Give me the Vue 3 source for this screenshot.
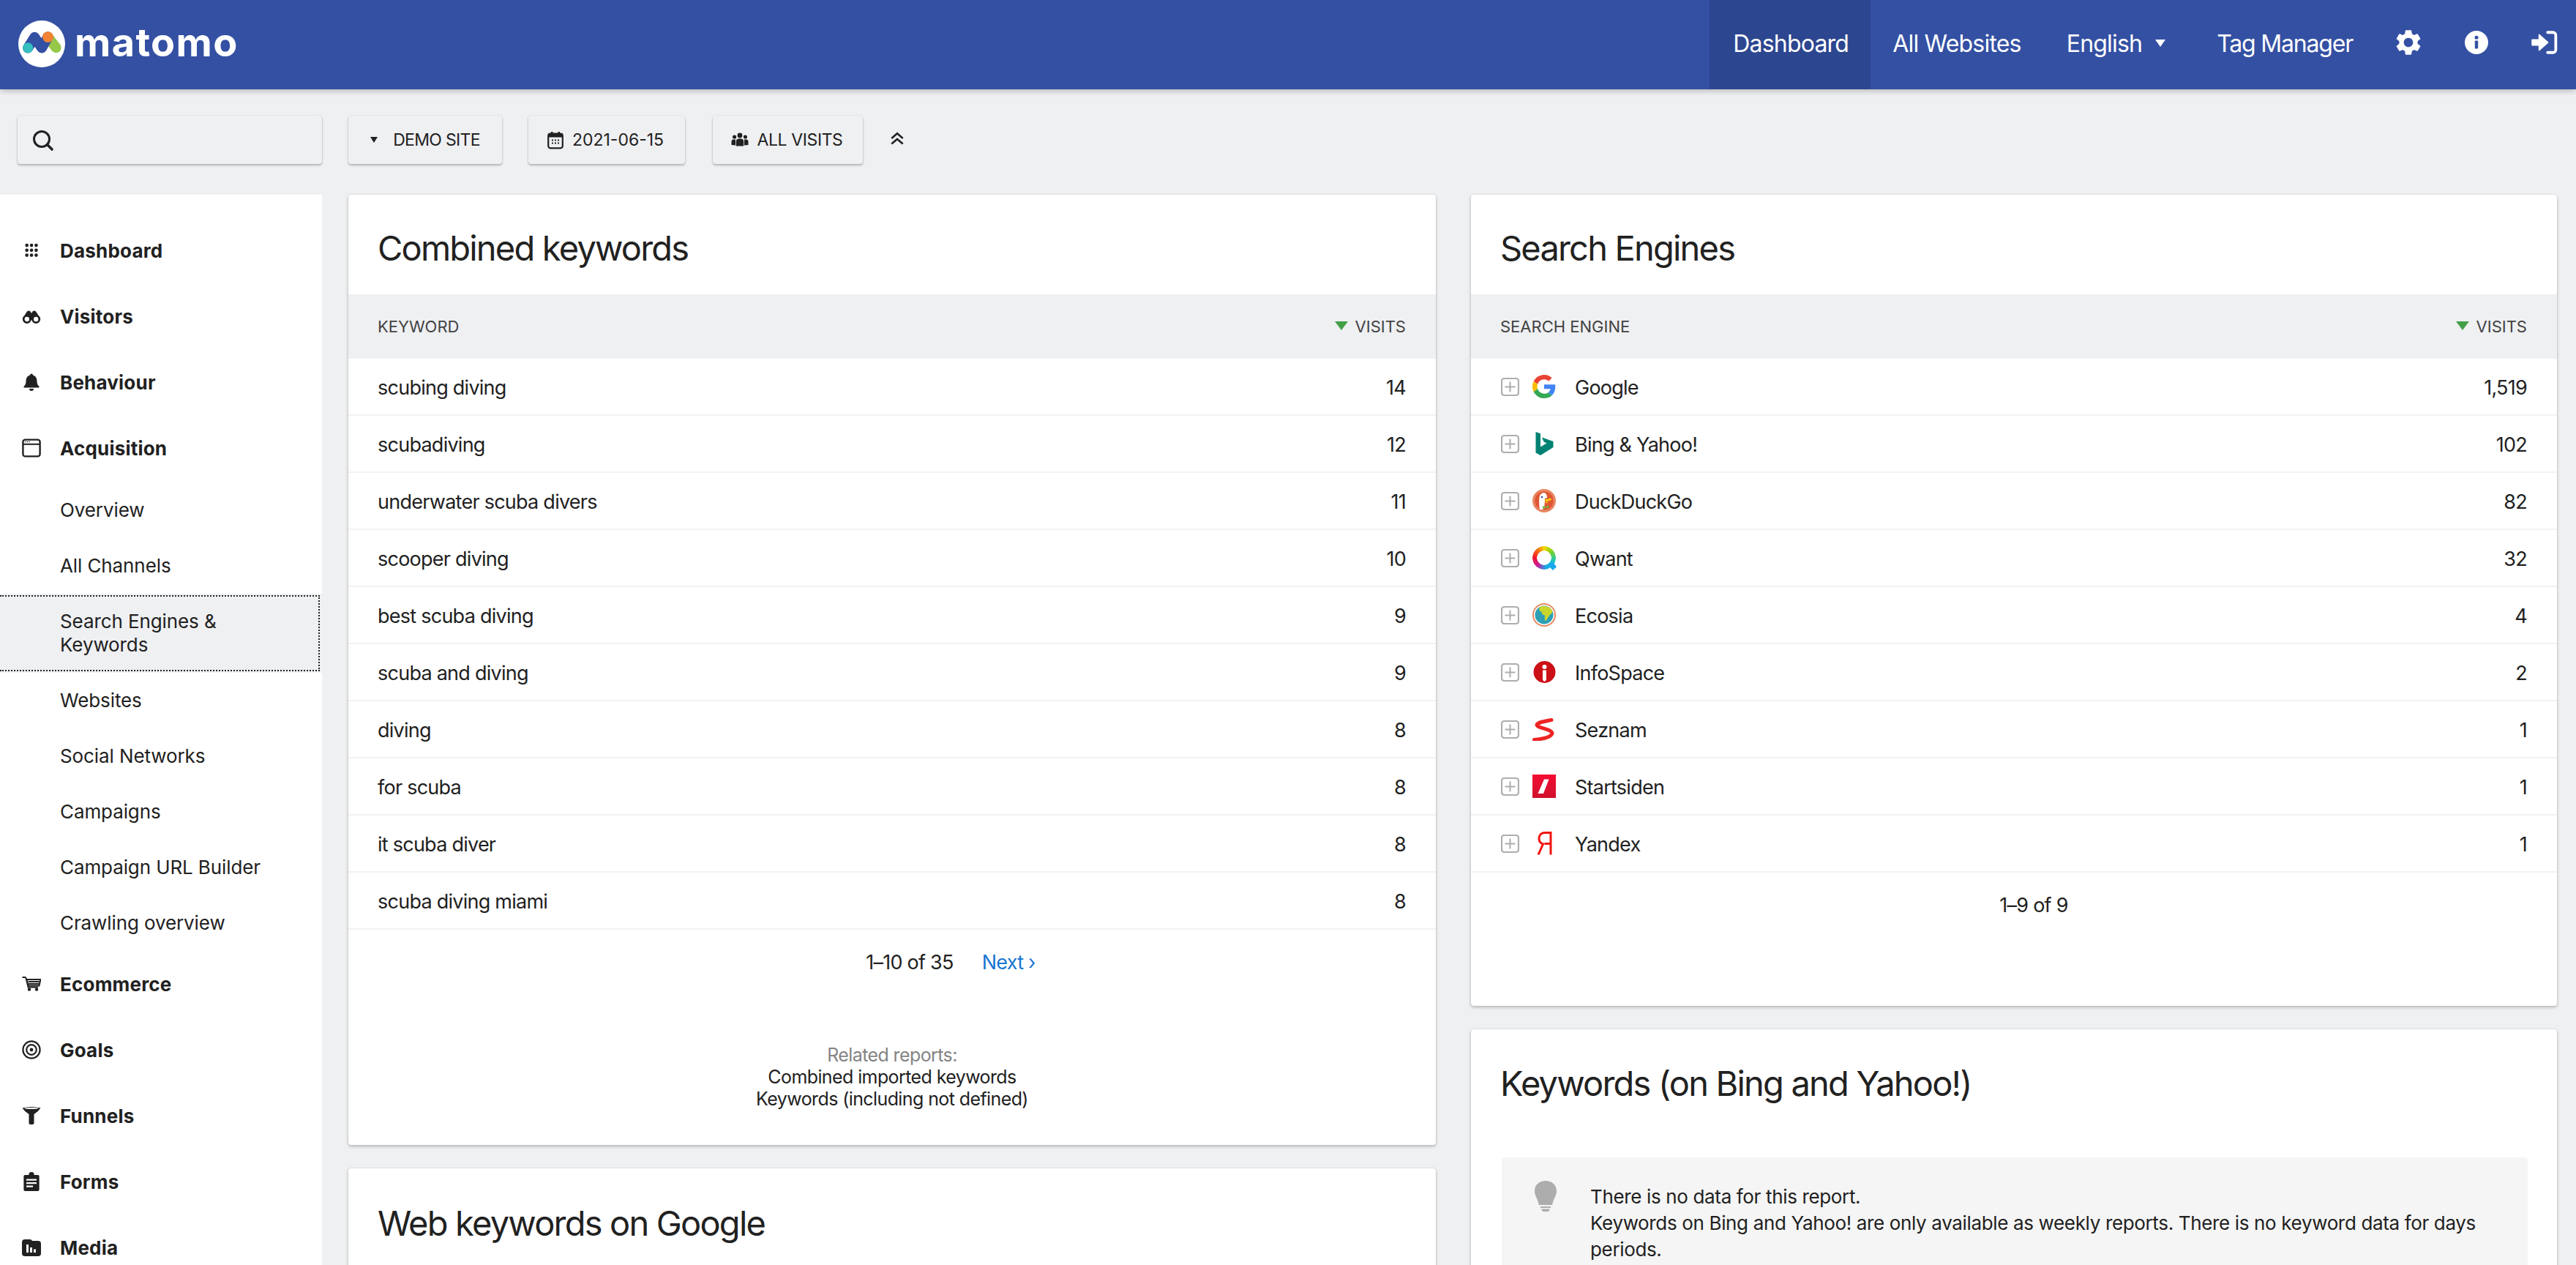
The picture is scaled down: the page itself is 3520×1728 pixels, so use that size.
<script setup>
const mainTop = [
  { name: 'Dashboard', icon: 'grid' },
  { name: 'Visitors', icon: 'binoc' },
  { name: 'Behaviour', icon: 'bell' },
  { name: 'Acquisition', icon: 'window' },
]
const subs = ['Overview', 'All Channels', 'Search Engines & Keywords', 'Websites', 'Social Networks', 'Campaigns', 'Campaign URL Builder', 'Crawling overview']
const mainBottom = [
  { name: 'Ecommerce', icon: 'cart' },
  { name: 'Goals', icon: 'goal' },
  { name: 'Funnels', icon: 'funnel' },
  { name: 'Forms', icon: 'form' },
  { name: 'Media', icon: 'media' },
]
const keywords = [
  ['scubing diving', 14], ['scubadiving', 12], ['underwater scuba divers', 11], ['scooper diving', 10],
  ['best scuba diving', 9], ['scuba and diving', 9], ['diving', 8], ['for scuba', 8], ['it scuba diver', 8], ['scuba diving miami', 8],
]
const engines = [
  ['Google', '1,519', 'google'], ['Bing & Yahoo!', '102', 'bing'], ['DuckDuckGo', '82', 'ddg'], ['Qwant', '32', 'qwant'],
  ['Ecosia', '4', 'ecosia'], ['InfoSpace', '2', 'infospace'], ['Seznam', '1', 'seznam'], ['Startsiden', '1', 'startsiden'], ['Yandex', '1', 'yandex'],
]
</script>

<template>
  <div class="page">
    <header class="topbar">
      <div class="brand">
        <svg class="brand-mark" viewBox="0 0 190 190" aria-hidden="true">
          <circle cx="95" cy="95" r="95" fill="#fff" />
          <path d="M120 67 L153 110" stroke="#95c748" stroke-width="42" stroke-linecap="round" fill="none" />
          <path d="M39 111 L66 68 L95 111 L120 67" stroke="#3450a3" stroke-width="42" stroke-linecap="round" stroke-linejoin="round" fill="none" />
          <circle cx="39" cy="111" r="21" fill="#35bfc0" />
          <circle cx="120" cy="67" r="22" fill="#f38334" />
        </svg>
        <span class="brand-text">matomo</span>
      </div>
      <nav class="topnav">
        <a class="navlink active">Dashboard</a>
        <a class="navlink">All Websites</a>
        <a class="navlink lang">English<i class="caret"></i></a>
        <a class="navlink tag">Tag Manager</a>
        <svg class="navicon gear" viewBox="0 0 24 24"><path fill="#fff" d="M19.14 12.94c.04-.3.06-.61.06-.94 0-.32-.02-.64-.07-.94l2.03-1.58c.18-.14.23-.41.12-.61l-1.92-3.32c-.12-.22-.37-.29-.59-.22l-2.39.96c-.5-.38-1.03-.7-1.62-.94l-.36-2.54c-.04-.24-.24-.41-.48-.41h-3.84c-.24 0-.43.17-.47.41l-.36 2.54c-.59.24-1.13.57-1.62.94l-2.39-.96c-.22-.08-.47 0-.59.22L2.74 8.87c-.12.21-.08.47.12.61l2.03 1.58c-.05.3-.09.63-.09.94s.02.64.07.94l-2.03 1.58c-.18.14-.23.41-.12.61l1.92 3.32c.12.22.37.29.59.22l2.39-.96c.5.38 1.03.7 1.62.94l.36 2.54c.05.24.24.41.48.41h3.84c.24 0 .44-.17.47-.41l.36-2.54c.59-.24 1.13-.56 1.62-.94l2.39.96c.22.08.47 0 .59-.22l1.92-3.32c.12-.22.07-.47-.12-.61l-2.01-1.58zM12 15.6c-1.98 0-3.6-1.62-3.6-3.6s1.62-3.6 3.6-3.6 3.6 1.62 3.6 3.6-1.62 3.6-3.6 3.6z" /></svg>
        <svg class="navicon info" viewBox="0 0 32 32"><circle cx="16" cy="16" r="16" fill="#fff" /><rect x="13.8" y="13.5" width="4.4" height="11" rx="1" fill="#3450a3" /><circle cx="16" cy="9.2" r="2.5" fill="#3450a3" /></svg>
        <svg class="navicon signin" viewBox="0 0 34 32"><path d="M21 3 h7 a3.5 3.5 0 0 1 3.5 3.5 v19 a3.5 3.5 0 0 1 -3.5 3.5 h-7" fill="none" stroke="#fff" stroke-width="3.6" stroke-linecap="round" /><path d="M1 12.5 h9 v-6.5 l11.5 10 l-11.5 10 v-6.5 h-9 z" fill="#fff" stroke="#fff" stroke-width="1.5" stroke-linejoin="round" /></svg>
      </nav>
    </header>

    <section class="filters">
      <div class="searchbox">
        <svg class="search-ic" viewBox="0 0 30 30"><circle cx="13" cy="13" r="10.5" fill="none" stroke="#212121" stroke-width="3" /><path d="M20.5 20.5 L27 27" stroke="#212121" stroke-width="3.6" stroke-linecap="round" /></svg>
      </div>
      <div class="fbtn site"><i class="caret dark"></i>DEMO SITE</div>
      <div class="fbtn date">
        <svg class="btn-ic" viewBox="0 0 22 24"><rect x="1.2" y="3" width="19.6" height="19.8" rx="3" fill="none" stroke="#212121" stroke-width="2.2" /><rect x="1" y="3" width="20" height="5" fill="#212121" /><rect x="5" y="0.5" width="2.5" height="4" fill="#212121" /><rect x="14.5" y="0.5" width="2.5" height="4" fill="#212121" /><g fill="#212121"><rect x="6" y="11" width="2" height="2" /><rect x="10" y="11" width="2" height="2" /><rect x="14" y="11" width="2" height="2" /><rect x="6" y="15" width="2" height="2" /><rect x="10" y="15" width="2" height="2" /><rect x="14" y="15" width="2" height="2" /></g></svg>
        2021-06-15
      </div>
      <div class="fbtn visits">
        <svg class="btn-ic wide" viewBox="0 0 24 20"><g fill="#212121"><circle cx="12" cy="4" r="3.4" /><circle cx="4.6" cy="6" r="2.6" /><circle cx="19.4" cy="6" r="2.6" /><path d="M6.8 18.5 v-6 a4 4 0 0 1 4 -4 h2.4 a4 4 0 0 1 4 4 v6 z" /><path d="M0.5 17 v-4.5 a3 3 0 0 1 3 -3 h2.5 v8 z" /><path d="M23.5 17 v-4.5 a3 3 0 0 0 -3 -3 h-2.5 v8 z" /></g></svg>
        ALL VISITS
      </div>
      <svg class="collapse" viewBox="0 0 20 20"><path d="M3 9 L10 3 L17 9 M3 16 L10 10 L17 16" fill="none" stroke="#212121" stroke-width="2.4" /></svg>
    </section>

    <div class="body">
      <aside class="sidebar">
        <div v-for="m in mainTop" :key="m.name" class="mainitem">
          <span class="mi"><svg viewBox="0 0 26 26">
            <g v-if="m.icon === 'grid'" fill="#212121"><circle v-for="c in [[4.5,4],[13,4],[21.5,4],[4.5,13],[13,13],[21.5,13],[4.5,22],[13,22],[21.5,22]]" :key="c.join()" :cx="c[0]" :cy="c[1]" r="3.1" transform="translate(3.3 3.1) scale(.75)" /></g>
            <g v-else-if="m.icon === 'binoc'"><path d="M1 16 L6.5 7 Q9 4.5 11.5 6.5 L13 9 L14.5 6.5 Q17 4.5 19.5 7 L25 16 L25 18 L1 18 Z" fill="#212121" /><circle cx="6.8" cy="17" r="4.6" fill="#fff" stroke="#212121" stroke-width="2.8" /><circle cx="19.2" cy="17" r="4.6" fill="#fff" stroke="#212121" stroke-width="2.8" /></g>
            <g v-else-if="m.icon === 'bell'" fill="#212121"><path d="M13 1.5 a2 2 0 0 1 2 2 C19 4.5 20.5 8 20.5 12 C20.5 15 21.5 17 23.5 19 V20.5 H2.5 V19 C4.5 17 5.5 15 5.5 12 C5.5 8 7 4.5 11 3.5 a2 2 0 0 1 2 -2 z" /><path d="M10 22 h6 a3 3 0 0 1 -6 0 z" /></g>
            <g v-else><rect x="1.4" y="1.6" width="23.2" height="22.8" rx="3" fill="none" stroke="#212121" stroke-width="2.4" /><rect x="1.4" y="6.8" width="23.2" height="2" fill="#212121" /><g fill="#212121"><circle cx="5" cy="4.5" r=".8" /><circle cx="7.5" cy="4.5" r=".8" /><circle cx="10" cy="4.5" r=".8" /></g></g>
          </svg></span>
          {{ m.name }}
        </div>
        <div class="sublist">
          <div v-for="s in subs" :key="s" class="subitem" :class="{ current: s.startsWith('Search') }">
            <span class="subinner">{{ s }}</span>
          </div>
        </div>
        <div v-for="m in mainBottom" :key="m.name" class="mainitem">
          <span class="mi"><svg viewBox="0 0 26 26">
            <g v-if="m.icon === 'cart'"><path d="M0.5 4 H4.5 L5.5 5 L8.5 17.5 H22" fill="none" stroke="#212121" stroke-width="1.9" /><path d="M6.5 7 H25.5 L23.5 15.5 H8.5 Z M8.6 10 H23.8 M9 13 H23.2" fill="none" stroke="#212121" stroke-width="1.9" /><circle cx="10" cy="20.5" r="2.2" fill="#212121" /><circle cx="20" cy="20.5" r="2.2" fill="#212121" /></g>
            <g v-else-if="m.icon === 'goal'"><circle cx="13" cy="13" r="11.6" fill="none" stroke="#212121" stroke-width="2.2" /><circle cx="13" cy="13" r="6.8" fill="none" stroke="#212121" stroke-width="2.2" /><circle cx="13" cy="13" r="2.4" fill="#212121" /></g>
            <g v-else-if="m.icon === 'funnel'"><path d="M0.5 2.5 Q13 -0.5 25.5 2.5 Q22 8 16.5 11 V24 Q13 26.5 9.5 24 V11 Q4 8 0.5 2.5 Z" fill="#212121" /><ellipse cx="13" cy="3" rx="9.5" ry="1" fill="#fff" /></g>
            <g v-else-if="m.icon === 'form'"><path d="M3 4 H9 V3 A4 3 0 0 1 17 3 V4 H23 A2 2 0 0 1 25 6 V24 A2 2 0 0 1 23 26 H3 A2 2 0 0 1 1 24 V6 A2 2 0 0 1 3 4 Z" fill="#212121" transform="translate(1.5 0) scale(.885 1)" /><rect x="6" y="9.5" width="14" height="2.2" fill="#fff" /><rect x="6" y="14" width="14" height="2.2" fill="#fff" /><rect x="6" y="18.5" width="9" height="2.2" fill="#fff" /></g>
            <g v-else><path d="M4 2 H11 Q13 2 14 4 H22 A4 4 0 0 1 26 8 V21 A4 4 0 0 1 22 25 H4 A4 4 0 0 1 0 21 V6 A4 4 0 0 1 4 2 Z" fill="#212121" /><g fill="#fff"><rect x="6" y="9" width="3" height="11" /><rect x="11" y="13" width="3" height="7" /><rect x="16" y="15.5" width="3" height="4.5" /></g></g>
          </svg></span>
          {{ m.name }}
        </div>
      </aside>

      <main class="columns">
        <div class="col">
          <article class="card kw">
            <h2 class="title">Combined keywords</h2>
            <div class="thead"><span>KEYWORD</span><span class="th-r"><i class="sort"></i>VISITS</span></div>
            <div v-for="k in keywords" :key="k[0]" class="row"><span>{{ k[0] }}</span><span>{{ k[1] }}</span></div>
            <div class="pager"><span>1–10 of 35</span><a class="next">Next ›</a></div>
            <div class="related">
              <div class="rel-h">Related reports:</div>
              <div>Combined imported keywords</div>
              <div>Keywords (including not defined)</div>
            </div>
          </article>
          <article class="card">
            <h2 class="title lower">Web keywords on Google</h2>
          </article>
        </div>
        <div class="col">
          <article class="card se">
            <h2 class="title">Search Engines</h2>
            <div class="thead"><span>SEARCH ENGINE</span><span class="th-r"><i class="sort"></i>VISITS</span></div>
            <div v-for="e in engines" :key="e[0]" class="row">
              <span class="eng">
                <svg class="plus" viewBox="0 0 25 25"><rect x="1" y="1" width="23" height="23" rx="3.5" fill="none" stroke="#aeaeae" stroke-width="2.2" /><path d="M12.5 5.5 V19.5 M5.5 12.5 H19.5" stroke="#aeaeae" stroke-width="2" /></svg>
                <span class="logo">
                  <svg v-if="e[2] === 'google'" viewBox="0 0 48 48"><path fill="#EA4335" d="M24 9.5c3.54 0 6.71 1.22 9.21 3.6l6.85-6.85C35.9 2.38 30.47 0 24 0 14.62 0 6.51 5.38 2.56 13.22l7.98 6.19C12.43 13.72 17.74 9.5 24 9.5z" /><path fill="#4285F4" d="M46.98 24.55c0-1.57-.15-3.09-.38-4.55H24v9.02h12.94c-.58 2.96-2.26 5.48-4.78 7.18l7.73 6c4.51-4.18 7.09-10.36 7.09-17.65z" /><path fill="#FBBC05" d="M10.53 28.59c-.48-1.45-.76-2.99-.76-4.59s.27-3.14.76-4.59l-7.98-6.19C.92 16.46 0 20.12 0 24c0 3.88.92 7.54 2.56 10.78l7.97-6.19z" /><path fill="#34A853" d="M24 48c6.48 0 11.93-2.13 15.89-5.81l-7.73-6c-2.15 1.45-4.92 2.3-8.16 2.3-6.26 0-11.57-4.22-13.47-9.91l-7.98 6.19C6.51 42.62 14.62 48 24 48z" /></svg>
                  <svg v-else-if="e[2] === 'bing'" viewBox="0 0 32 32"><path fill="#008373" d="M4.5 0 L11 2.2 V20.5 L19.5 15.5 L15.5 13.6 L13 7.6 L28.5 13 V21 L11 32 L4.5 28.4 Z" /></svg>
                  <svg v-else-if="e[2] === 'ddg'" viewBox="0 0 32 32"><circle cx="16" cy="16" r="15" fill="#de5833" stroke="#e9875f" stroke-width="2" /><circle cx="16" cy="16" r="13.5" fill="none" stroke="#f4c9b6" stroke-width=".6" /><path d="M10 28 C9 22 9 15 9.5 12 C10 7 13 5 16 5 C19 6 20 9 20 12 L17 13 L17 17 L16 26 L14 28 Z" fill="#fff" /><circle cx="13" cy="11" r="1.3" fill="#2d4f8e" /><path d="M16 15 L25 12.5 L26 15 L19 17 Z" fill="#fdd20a" /><path d="M16.5 18 L22 17 L20 19.5 Z" fill="#fdb81e" /><path d="M14 23 L18 24.5 L22 22.5 L22 26 L18 25.5 L14 27 Z" fill="#65bc46" /></svg>
                  <span v-else-if="e[2] === 'qwant'" class="qwant"><i class="q-ring"></i><i class="q-tail"></i></span>
                  <svg v-else-if="e[2] === 'ecosia'" viewBox="0 0 32 32"><circle cx="16" cy="16" r="15" fill="#fff" stroke="#e8895f" stroke-width="2" /><circle cx="16" cy="16" r="12.5" fill="#2e9fb4" /><path d="M10 5 C15 3 24 4 27 10 C28 14 24 15 23 17 C21 19 20 24 17.5 24 C16 20 18 18 16 16 C13 16 12 13 13 11 C11 12 8 11 10 5 Z" fill="#c9d72c" /></svg>
                  <svg v-else-if="e[2] === 'infospace'" viewBox="0 0 32 32"><circle cx="16.5" cy="16" r="15" fill="#cc1017" /><circle cx="16.5" cy="9" r="3" fill="#fff" /><path d="M14 13.5 H19 V27 L16.5 29 L14 27 Z" fill="#fff" /></svg>
                  <svg v-else-if="e[2] === 'seznam'" viewBox="0 0 32 32"><path d="M26 3.5 C18 5 8.5 6 6 10 C6.5 15 26 15.5 27 21.5 C26 27 14 29.5 2.5 30.5" fill="none" stroke="#ee2424" stroke-width="5" stroke-linecap="round" /></svg>
                  <svg v-else-if="e[2] === 'startsiden'" viewBox="0 0 32 32"><defs><linearGradient id="ssg" x1="0" y1="0" x2="0" y2="1"><stop offset="0" stop-color="#f40d32" /><stop offset="1" stop-color="#d0112e" /></linearGradient></defs><rect width="32" height="32" fill="url(#ssg)" /><path d="M16 6.5 H22.5 L15 26 H7.5 Z" fill="#fff" /></svg>
                  <svg v-else viewBox="0 0 32 32"><path d="M25 31.5 V1.5 H17 C11.5 1.5 9 5.5 9 9.5 C9 13.5 11.5 16 14.5 17 L8 31.5 M25 16.5 H16.5" fill="none" stroke="#f2140c" stroke-width="3" /></svg>
                </span>
                {{ e[0] }}
              </span>
              <span>{{ e[1] }}</span>
            </div>
            <div class="pager small"><span>1–9 of 9</span></div>
          </article>
          <article class="card">
            <h2 class="title second">Keywords (on Bing and Yahoo!)</h2>
            <div class="notice">
              <svg class="bulb" viewBox="0 0 30 42"><path d="M15 0 C23 0 30 5 30 14 C30 20 26 24 24 33 H6 C4 24 0 20 0 14 C0 5 7 0 15 0 Z" fill="#adadad" /><rect x="8" y="35" width="14" height="2" fill="#adadad" /><path d="M9 38.5 H21 L19 42 H11 Z" fill="#adadad" /></svg>
              <p>There is no data for this report.<br />Keywords on Bing and Yahoo! are only available as weekly reports. There is no keyword data for days periods.</p>
            </div>
          </article>
        </div>
      </main>
    </div>
  </div>
</template>

<style>
html, body { margin: 0; background: #eff0f2; overflow: hidden; }
</style>

<style scoped>
.page {
  width: 3520px;
  height: 1728px;
  overflow: hidden;
  background: #eff0f2;
  color: #212121;
  font-family: Inter, "Liberation Sans", sans-serif;
  font-size: 27px;
  letter-spacing: -.75px;
}
.topbar {
  height: 122px;
  background: #3450a3;
  display: flex;
  justify-content: space-between;
  box-shadow: 0 2px 8px rgba(0, 0, 0, .25);
  position: relative;
}
.brand { display: flex; align-items: center; padding-left: 25px; }
.brand-mark { width: 64px; height: 64px; margin-top: -2px; }
.brand-text {
  margin-left: 13px;
  margin-top: -8px;
  color: #fff;
  font-size: 54px;
  font-weight: 700;
  letter-spacing: 1.4px;
}
.topnav { display: flex; align-items: stretch; color: #fff; font-size: 32px; letter-spacing: -.8px; }
.navlink { display: flex; align-items: center; padding: 0 32px 0 30px; margin-top: -4px; }
.navlink.active { background: #2d4690; padding: 0 32px; margin-top: 0; padding-bottom: 4px; width: 220px; box-sizing: border-box; }
.navlink.lang { padding: 0 0 0 30px; }
.navlink.tag { padding: 0 0 0 70px; letter-spacing: -1.2px; }
.caret {
  display: inline-block;
  width: 0;
  height: 0;
  border-left: 7px solid transparent;
  border-right: 7px solid transparent;
  border-top: 10px solid #fff;
  margin-left: 18px;
}
.caret.dark {
  border-left-width: 5px;
  border-right-width: 5px;
  border-top: 8px solid #212121;
  margin: 0 21px 0 0;
}
.navicon { align-self: center; margin-top: -6px; }
.gear { width: 42px; height: 42px; margin-left: 55px; }
.info { width: 32px; height: 32px; margin-left: 56px; margin-top: -6px; }
.signin { width: 36px; height: 34px; margin-left: 59px; margin-right: 25px; }

.filters {
  display: flex;
  align-items: center;
  height: 66px;
  padding: 36px 0 42px 24px;
  font-size: 23px;
  letter-spacing: -.7px;
}
.searchbox, .fbtn {
  height: 66px;
  border-radius: 4px;
  box-shadow: 0 2px 3px rgba(0, 0, 0, .24), 0 0 2px rgba(0, 0, 0, .12);
  display: flex;
  align-items: center;
  box-sizing: border-box;
}
.searchbox { width: 416px; padding-left: 20px; margin-right: 36px; }
.search-ic { width: 30px; height: 30px; margin-top: 2px; }
.fbtn { justify-content: center; }
.site { width: 210px; margin-right: 36px; }
.date { width: 214px; margin-right: 38px; letter-spacing: 0; padding-right: 3px; }
.visits { width: 205px; letter-spacing: -.4px; padding-right: 3px; }
.btn-ic { width: 22px; height: 25px; margin-right: 12px; }
.btn-ic.wide { width: 24px; height: 20px; }
.collapse { width: 22px; height: 22px; margin-left: 36px; margin-top: -2px; }

.body { display: flex; align-items: flex-start; }
.sidebar {
  width: 440px;
  flex: none;
  background: #fff;
  padding-top: 31px;
  box-sizing: border-box;
}
.mainitem {
  height: 90px;
  display: flex;
  align-items: center;
  font-weight: 700;
  font-size: 26px;
  letter-spacing: .2px;
  padding-left: 30px;
}
.mi { width: 26px; height: 26px; margin-right: 26px; display: block; }
.mi svg { width: 26px; height: 26px; display: block; }
.sublist { padding-top: 2px; }
.subitem {
  min-height: 76px;
  display: flex;
  align-items: center;
  padding-left: 82px;
  font-size: 26px;
  letter-spacing: -.1px;
  line-height: 32px;
  box-sizing: border-box;
}
.subitem.current {
  background: #eff0f2;
  padding: 2px 3px 2px 0;
  height: 108px;
}
.current .subinner {
  width: 100%;
  height: 100%;
  box-sizing: border-box;
  padding: 0 70px 0 82px;
  display: flex;
  align-items: center;
  border: 2px dotted #212121;
  border-left: 0;
}

.columns {
  display: grid;
  grid-template-columns: 1486px 1484px;
  column-gap: 48px;
  margin-left: 36px;
}
.col { display: flex; flex-direction: column; gap: 32px; }
.card {
  background: #fff;
  border-radius: 4px;
  box-shadow: 0 2px 4px rgba(0, 0, 0, .24), 0 0 2px rgba(0, 0, 0, .12);
}
.kw { height: 1298px; box-sizing: border-box; }
.se { height: 1108px; box-sizing: border-box; }
.title {
  margin: 0;
  height: 136px;
  padding: 8px 0 0 40px;
  display: flex;
  align-items: center;
  font-size: 47px;
  font-weight: 400;
  letter-spacing: -1.8px;
  box-sizing: border-box;
}
.title.lower { padding-top: 12px; }
.title.second { height: 147px; padding-top: 0; }
.thead {
  height: 88px;
  background: #eff0f2;
  display: flex;
  align-items: center;
  justify-content: space-between;
  padding: 0 41px 0 40px;
  font-size: 22px;
  letter-spacing: 0;
  color: #424242;
}
.th-r { display: flex; align-items: center; }
.sort {
  width: 0;
  height: 0;
  border-left: 9px solid transparent;
  border-right: 9px solid transparent;
  border-top: 12px solid #43a047;
  margin-right: 10px;
  margin-top: -3px;
}
.row {
  height: 78px;
  box-sizing: border-box;
  border-bottom: 2px solid #f2f2f2;
  display: flex;
  align-items: center;
  justify-content: space-between;
  padding: 2px 41px 0 40px;
}
.eng { display: flex; align-items: center; }
.plus { width: 25px; height: 25px; margin-left: 1px; margin-right: 18px; margin-top: -2px; }
.logo { width: 32px; height: 32px; margin-right: 26px; margin-top: -2px; display: block; }
.logo svg { width: 32px; height: 32px; display: block; }
.qwant { display: block; width: 32px; height: 32px; position: relative; }
.q-ring {
  position: absolute;
  inset: 0;
  border-radius: 50%;
  background: conic-gradient(#f7d700 0deg, #7ed321 50deg, #19c5c8 110deg, #1aa7ec 170deg, #c81d9a 220deg, #f0162b 270deg, #f76b12 320deg, #f7d700 360deg);
  -webkit-mask: radial-gradient(circle, transparent 9.5px, #000 10px);
  mask: radial-gradient(circle, transparent 9.5px, #000 10px);
}
.q-tail {
  position: absolute;
  right: -1px;
  bottom: -1px;
  width: 12px;
  height: 11px;
  background: #1aa7ec;
  clip-path: polygon(0 30%, 60% 0, 100% 60%, 55% 100%);
}
.pager {
  display: flex;
  justify-content: center;
  gap: 39px;
  padding: 28px 0 0 160px;
  line-height: 34px;
}
.pager.small { padding: 28px 0 0 54px; }
.next { color: #1976d2; }
.related {
  margin-top: 94px;
  text-align: center;
  font-size: 25px;
  letter-spacing: -.6px;
  line-height: 30px;
}
.rel-h { color: #848484; }
.notice {
  margin: 28px 40px 0 42px;
  background: #f5f5f5;
  border-radius: 4px;
  display: flex;
  align-items: flex-start;
  padding: 32px 40px 30px 45px;
  line-height: 36px;
  font-size: 26px;
  letter-spacing: -.35px;
}
.bulb { width: 30px; height: 42px; flex: none; margin-right: 46px; }
.notice p { margin: 4px 0 0; }
</style>
